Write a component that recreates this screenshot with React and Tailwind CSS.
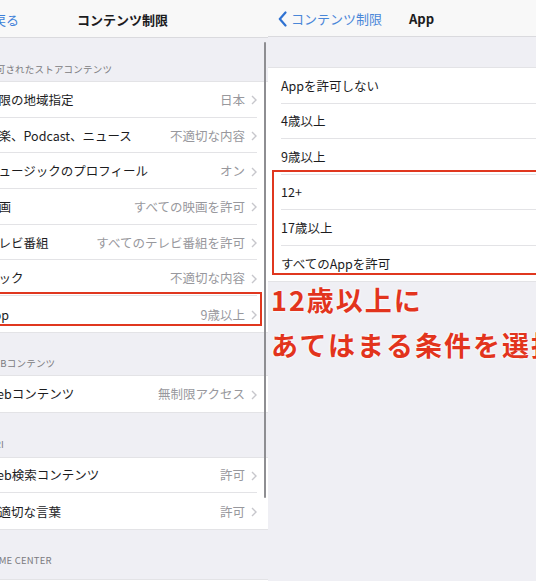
import React from "react";

const font = { fontFamily: '"Noto Sans CJK JP", "Noto Sans", sans-serif' };

function Chevron() {
  return (
    <svg width="6" height="10" viewBox="0 0 6 10" className="ml-[6px] shrink-0">
      <path d="M1 1l4 4-4 4" fill="none" stroke="#c7c7cc" strokeWidth="1.4" />
    </svg>
  );
}

function SettingRow({ label, value, last }) {
  return (
    <div className="flex h-[35.7px] items-center bg-white pr-[11px]">
      <div
        className={`flex h-full flex-1 items-center pt-[2px] ${
          last ? "" : "border-b border-[#e3e3e6]"
        }`}
      >
        <span className="flex-1 truncate text-[12.5px] text-[#1c1c1e]">{label}</span>
        <span className="text-[12.5px] text-[#98989d]">{value}</span>
        <Chevron />
      </div>
    </div>
  );
}

function SectionHeader({ children, height, bottom = 5 }) {
  return (
    <div
      className="flex items-end text-[9.5px] tracking-[0.2px] text-[#7b7b80]"
      style={{ height, paddingBottom: bottom }}
    >
      {children}
    </div>
  );
}

function ContentPanel() {
  return (
    <div className="relative h-full w-[268px] shrink-0 overflow-hidden bg-[#efeff4]">
      <div className="flex h-[38px] items-center border-b border-[#dadade] bg-[#f8f8f8] pt-[2px]">
        <span className="-ml-[7px] text-[13px] text-[#3d7fd9]">戻る</span>
        <span className="ml-[58px] text-[13px] font-bold text-[#1c1c1e]">コンテンツ制限</span>
      </div>

      <div className="-ml-[14px] flex flex-col">
        <SectionHeader height="43px">許可されたストアコンテンツ</SectionHeader>
        <div className="border-y border-[#e3e3e6]">
          <SettingRow label="制限の地域指定" value="日本" />
          <SettingRow label="音楽、Podcast、ニュース" value="不適切な内容" />
          <SettingRow label="ミュージックのプロフィール" value="オン" />
          <SettingRow label="映画" value="すべての映画を許可" />
          <SettingRow label="テレビ番組" value="すべてのテレビ番組を許可" />
          <SettingRow label="ブック" value="不適切な内容" />
          <SettingRow label="App" value="9歳以上" last />
        </div>

        <SectionHeader height="42px">WEBコンテンツ</SectionHeader>
        <div className="border-y border-[#e3e3e6]">
          <SettingRow label="Webコンテンツ" value="無制限アクセス" last />
        </div>

        <SectionHeader height="44px">SIRI</SectionHeader>
        <div className="border-y border-[#e3e3e6]">
          <SettingRow label="Web検索コンテンツ" value="許可" />
          <SettingRow label="不適切な言葉" value="許可" last />
        </div>

        <SectionHeader height="49px" bottom={12}>GAME CENTER</SectionHeader>
        <div className="border-y border-[#e3e3e6]">
          <SettingRow label="マルチプレイヤーゲーム" value="許可" />
        </div>
      </div>

      <div className="absolute right-[2px] top-[42px] h-[456px] w-[2.5px] rounded-full bg-[#8e8e92]" />
      <div className="absolute left-[-4px] top-[292px] h-[34px] w-[266px] border-2 border-[#e0371f]" />
    </div>
  );
}

function OptionRow({ label, last }) {
  return (
    <div className="flex h-[35.5px] items-center bg-white pl-[13px]">
      <div
        className={`flex h-full flex-1 items-center pt-[2px] text-[12.5px] text-[#1c1c1e] ${
          last ? "" : "border-b border-[#e3e3e6]"
        }`}
      >
        {label}
      </div>
    </div>
  );
}

function AppPanel() {
  return (
    <div className="relative flex h-full flex-1 flex-col overflow-hidden bg-[#efeff4]">
      <div className="flex h-[37px] items-center border-b border-[#dadade] bg-[#f8f8f8] pt-[2px]">
        <svg width="9" height="16" viewBox="0 0 9 16" className="ml-[10px]">
          <path
            d="M7.5 1.5L1.8 8l5.7 6.5"
            fill="none"
            stroke="#2f72d2"
            strokeWidth="2.2"
            strokeLinecap="round"
            strokeLinejoin="round"
          />
        </svg>
        <span className="ml-[4px] text-[13px] text-[#4a87d8]">コンテンツ制限</span>
        <span className="ml-[27px] text-[13px] font-bold text-[#1c1c1e]">App</span>
      </div>

      <div className="mt-[30px] border-y border-[#e3e3e6]">
        <OptionRow label="Appを許可しない" />
        <OptionRow label="4歳以上" />
        <OptionRow label="9歳以上" />
        <OptionRow label="12+" />
        <OptionRow label="17歳以上" />
        <OptionRow label="すべてのAppを許可" last />
      </div>

      <div className="ml-[3px] mt-[-5px] whitespace-nowrap text-[27px] font-bold leading-[45px] tracking-[2px] text-[#e2341d] [text-shadow:0_0_2px_#fff,0_0_3px_#fff]">
        <div>12歳以上に</div>
        <div>あてはまる条件を選択</div>
      </div>

      <div className="absolute left-[4px] right-[-6px] top-[170px] h-[105px] border-2 border-[#e0371f]" />
    </div>
  );
}

export default function App() {
  return (
    <div className="flex h-[581px] w-[536px] overflow-hidden bg-[#efeff4]" style={font}>
      <ContentPanel />
      <AppPanel />
    </div>
  );
}
